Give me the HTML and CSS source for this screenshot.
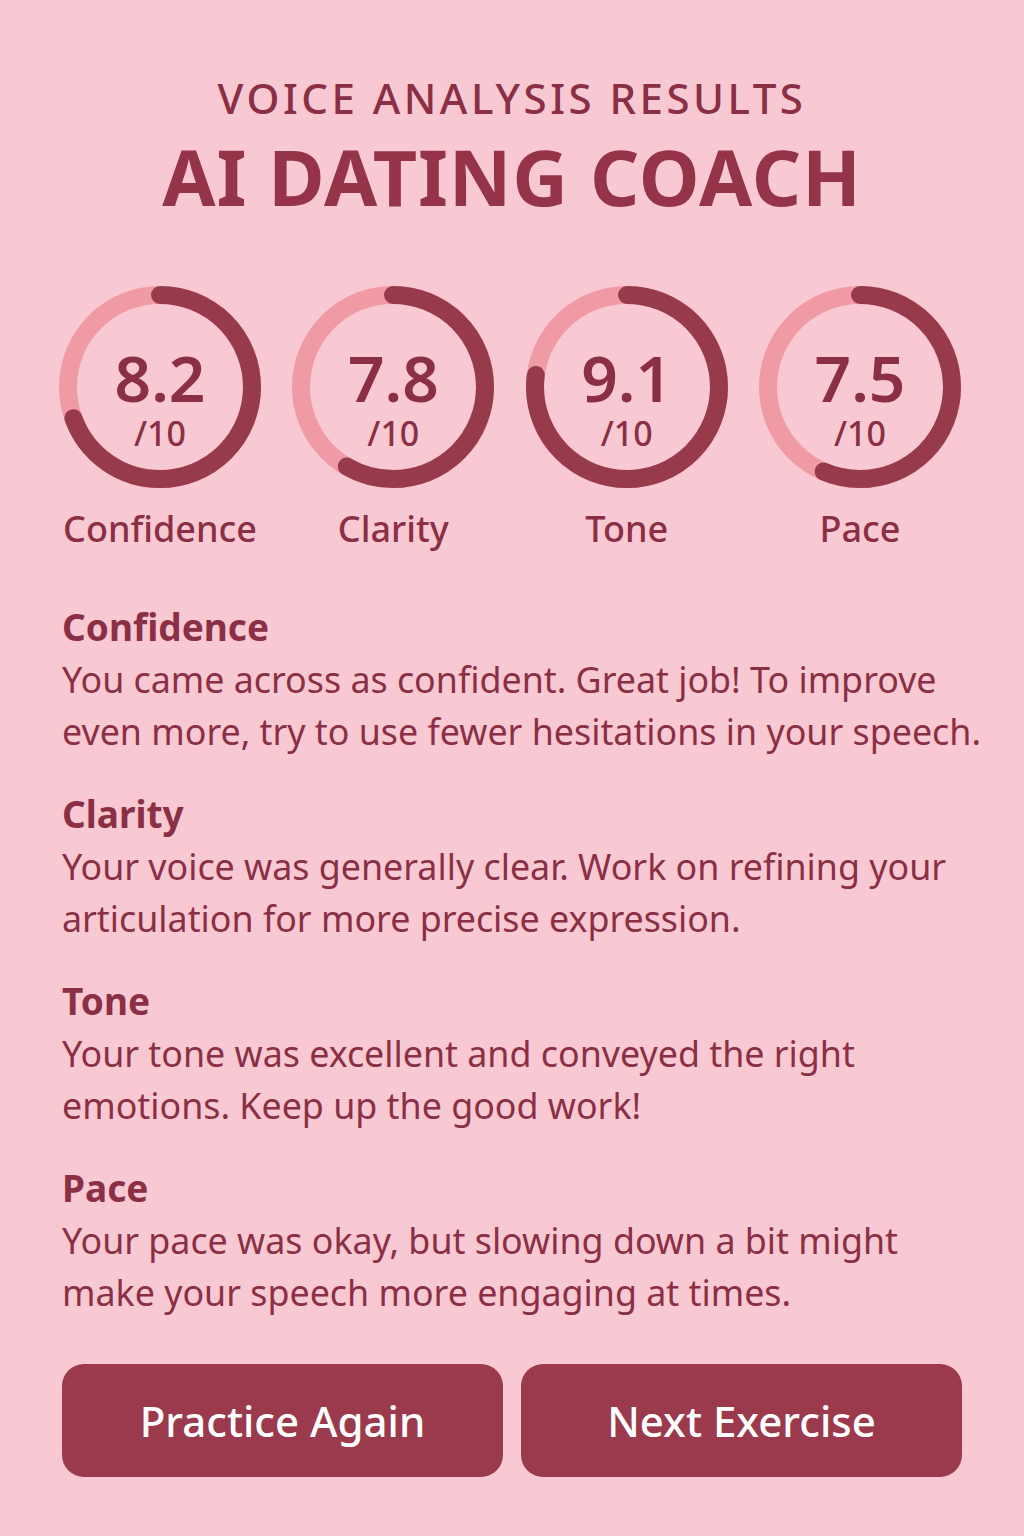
FILE: index.html
```html
<!DOCTYPE html>
<html>
<head>
<meta charset="utf-8">
<link rel="stylesheet" href="styles.css">
</head>
<body>
<main class="page">
  <header class="header">
    <div class="eyebrow">VOICE ANALYSIS RESULTS</div>
    <h1 class="title">AI DATING COACH</h1>
  </header>

  <section class="gauges">
    <div class="gauge">
      <div class="ring">
        <svg viewBox="0 0 204 204" width="204" height="204">
          <circle class="track" cx="102" cy="102" r="92"/>
          <circle class="bar" cx="102" cy="102" r="92" style="stroke-dasharray: 401 578"/>
        </svg>
        <div class="score"><span class="num">8.2</span><span class="den">/10</span></div>
      </div>
      <div class="label">Confidence</div>
    </div>
    <div class="gauge">
      <div class="ring">
        <svg viewBox="0 0 204 204" width="204" height="204">
          <circle class="track" cx="102" cy="102" r="92"/>
          <circle class="bar" cx="102" cy="102" r="92" style="stroke-dasharray: 337 578"/>
        </svg>
        <div class="score"><span class="num">7.8</span><span class="den">/10</span></div>
      </div>
      <div class="label">Clarity</div>
    </div>
    <div class="gauge">
      <div class="ring">
        <svg viewBox="0 0 204 204" width="204" height="204">
          <circle class="track" cx="102" cy="102" r="92"/>
          <circle class="bar" cx="102" cy="102" r="92" style="stroke-dasharray: 445 578"/>
        </svg>
        <div class="score"><span class="num">9.1</span><span class="den">/10</span></div>
      </div>
      <div class="label">Tone</div>
    </div>
    <div class="gauge">
      <div class="ring">
        <svg viewBox="0 0 204 204" width="204" height="204">
          <circle class="track" cx="102" cy="102" r="92"/>
          <circle class="bar" cx="102" cy="102" r="92" style="stroke-dasharray: 326 578"/>
        </svg>
        <div class="score"><span class="num">7.5</span><span class="den">/10</span></div>
      </div>
      <div class="label">Pace</div>
    </div>
  </section>

  <section class="feedback">
    <div class="item">
      <h2 class="item-title">Confidence</h2>
      <p class="item-text">You came across as confident. Great job! To improve even more, try to use fewer hesitations in your speech.</p>
    </div>
    <div class="item">
      <h2 class="item-title">Clarity</h2>
      <p class="item-text">Your voice was generally clear. Work on refining your articulation for more precise expression.</p>
    </div>
    <div class="item">
      <h2 class="item-title">Tone</h2>
      <p class="item-text">Your tone was excellent and conveyed the right emotions. Keep up the good work!</p>
    </div>
    <div class="item">
      <h2 class="item-title">Pace</h2>
      <p class="item-text">Your pace was okay, but slowing down a bit might make your speech more engaging at times.</p>
    </div>
  </section>

  <div class="actions">
    <button class="btn">Practice Again</button>
    <button class="btn">Next Exercise</button>
  </div>
</main>
</body>
</html>
```

FILE: styles.css
```css
* { box-sizing: border-box; }

html, body {
  margin: 0;
  padding: 0;
  background: #f9c9d3;
}

body {
  font-family: "Noto Sans", "Open Sans", sans-serif;
  color: #8a2f44;
}

.page {
  width: 1024px;
  min-height: 1536px;
  padding: 74px 62px 0 62px;
  display: flex;
  flex-direction: column;
}

.header {
  text-align: center;
}

.eyebrow {
  font-size: 42px;
  font-weight: 500;
  letter-spacing: 3.5px;
  line-height: 48px;
  color: #8a2f44;
}

.title {
  margin: 9px 0 0 0;
  font-size: 77px;
  font-weight: 700;
  letter-spacing: 0.9px;
  line-height: 92px;
  color: #953449;
}

.gauges {
  margin-top: 62px;
  display: flex;
  justify-content: space-between;
  margin-left: -5px;
  margin-right: -1px;
}

.gauge {
  width: 206px;
  display: flex;
  flex-direction: column;
  align-items: center;
}

.ring {
  position: relative;
  width: 204px;
  height: 204px;
}

.ring svg {
  display: block;
}

.track {
  fill: none;
  stroke: #f09aa6;
  stroke-width: 18;
}

.bar {
  fill: none;
  stroke: #973a4c;
  stroke-width: 18;
  stroke-linecap: round;
  transform: rotate(-90deg);
  transform-origin: 102px 102px;
}

.score {
  position: absolute;
  inset: 0;
  display: flex;
  flex-direction: column;
  align-items: center;
  justify-content: center;
  padding-top: 22px;
}

.num {
  font-size: 64px;
  font-weight: 600;
  line-height: 70px;
  color: #8a2f44;
}

.den {
  font-size: 34px;
  font-weight: 500;
  line-height: 40px;
  color: #8a2f44;
}

.label {
  margin-top: 16px;
  font-size: 36px;
  font-weight: 500;
  line-height: 48px;
  color: #8a2f44;
}

.feedback {
  margin-top: 48px;
  margin-right: -22px;
  display: flex;
  flex-direction: column;
  gap: 31px;
}

.item-title {
  margin: 0;
  font-size: 37px;
  font-weight: 700;
  line-height: 52px;
  color: #8a2f44;
}

.item-text {
  margin: 0;
  font-size: 35.8px;
  font-weight: 400;
  line-height: 52px;
  color: #8a2f44;
}

.actions {
  margin-top: 46px;
  display: grid;
  grid-template-columns: 1fr 1fr;
  gap: 18px;
}

.btn {
  height: 113px;
  border: none;
  border-radius: 22px;
  background: #9b3a4d;
  color: #ffffff;
  font-family: "Noto Sans", "Open Sans", sans-serif;
  font-size: 42px;
  font-weight: 500;
  cursor: pointer;
}
```
